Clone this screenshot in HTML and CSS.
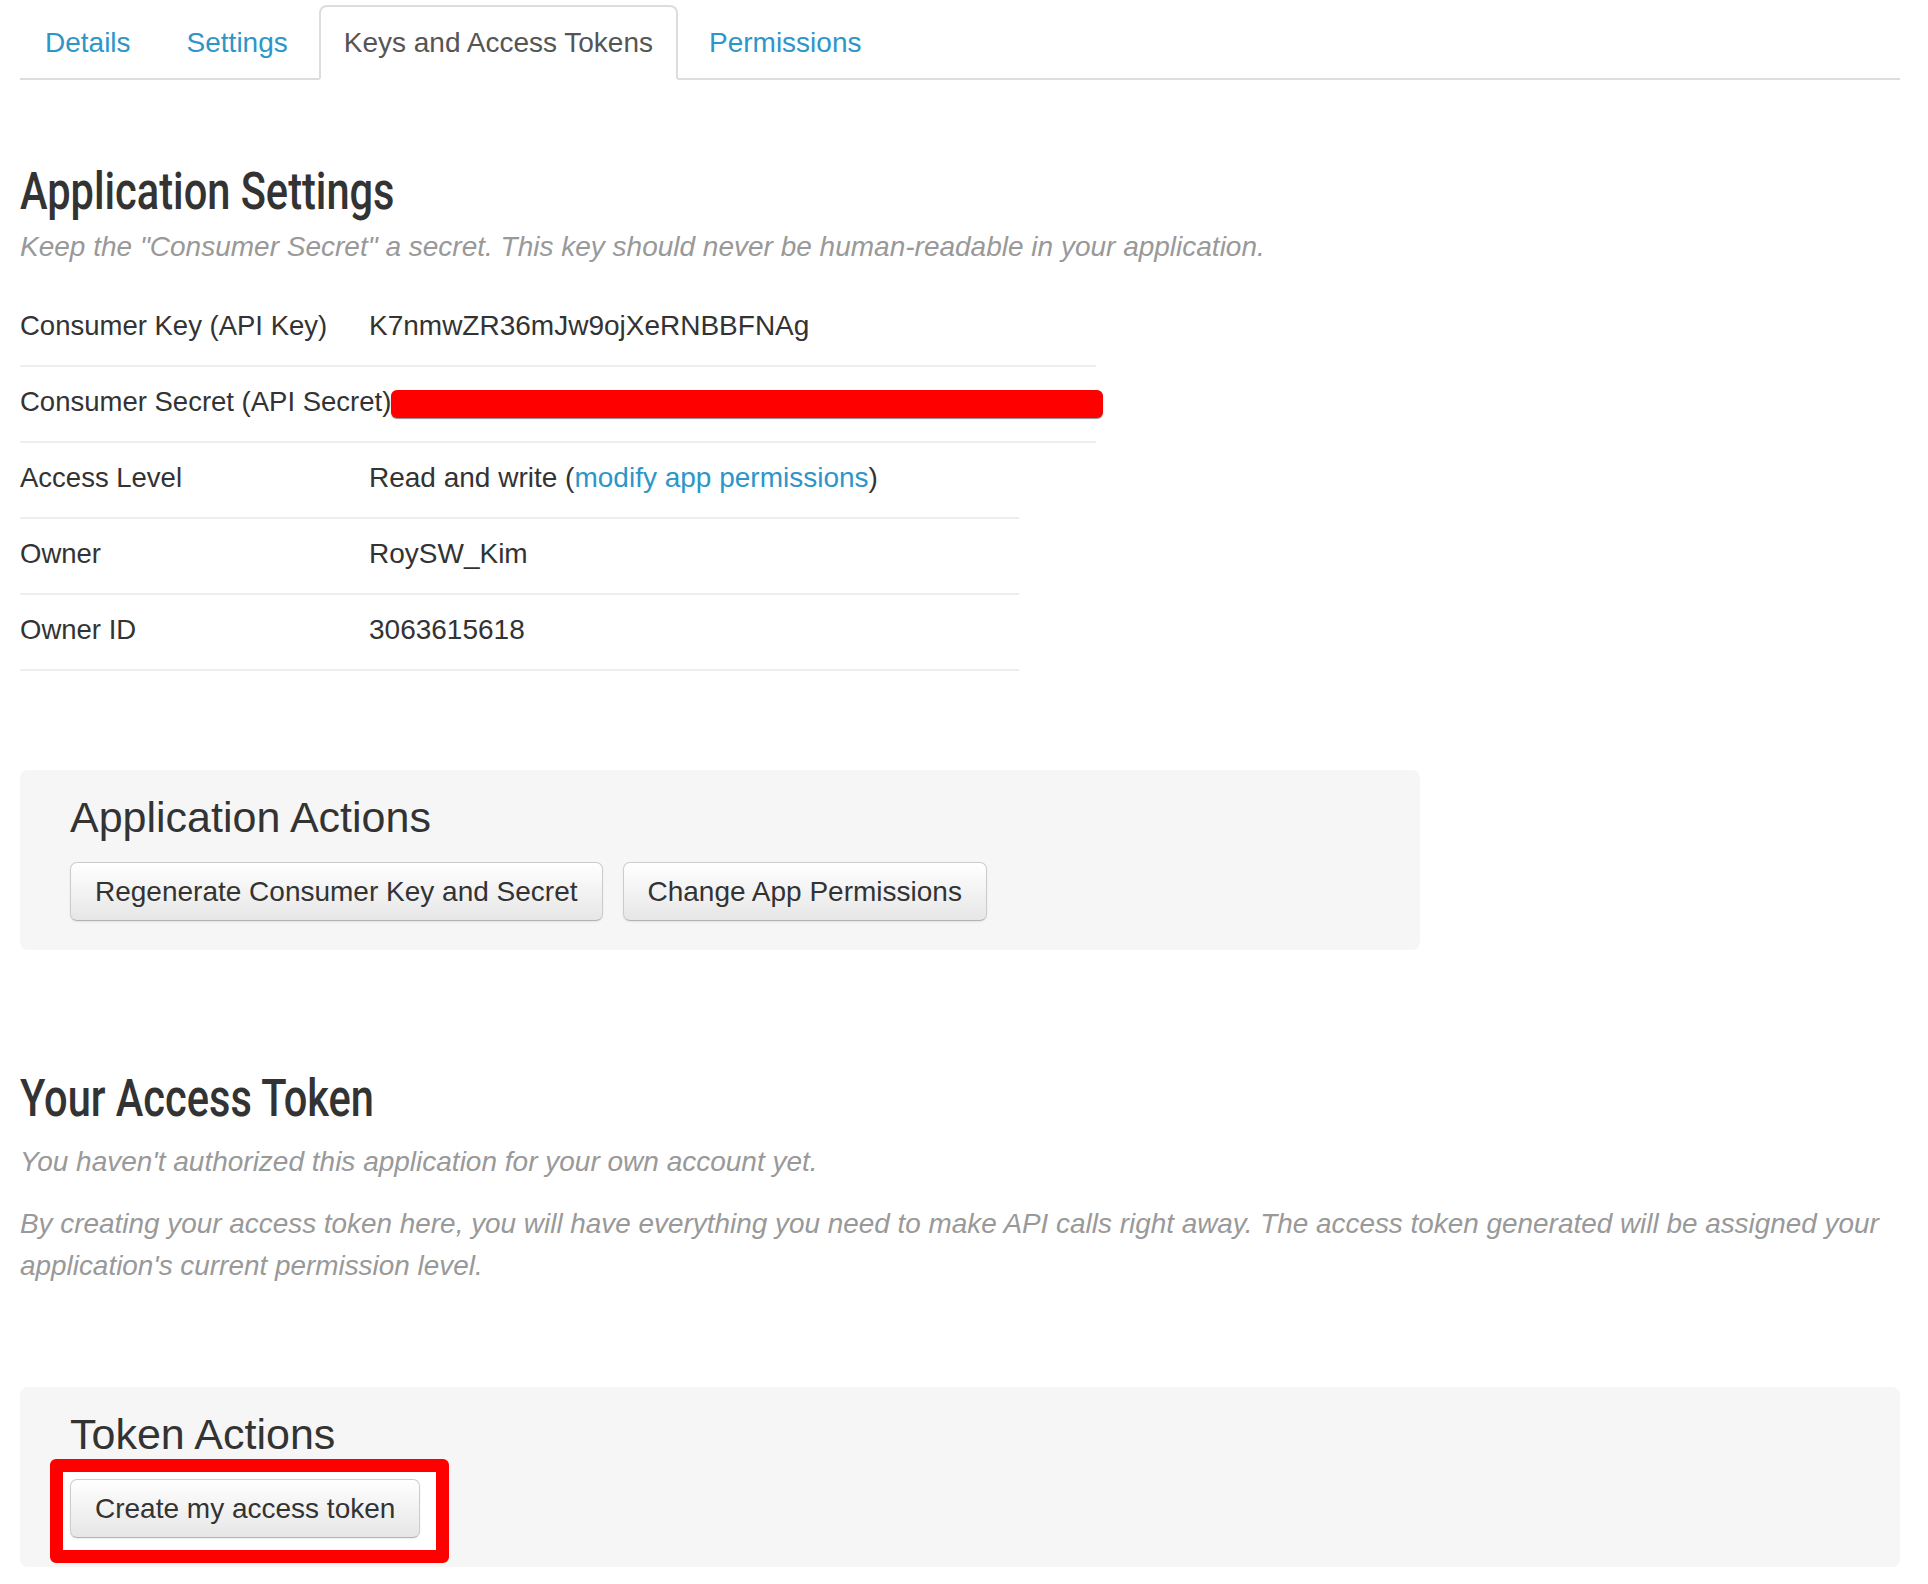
FILE: index.html
```html
<!DOCTYPE html>
<html lang="en">
<head>
<meta charset="utf-8">
<title>Keys and Access Tokens</title>
<link rel="stylesheet" href="styles.css">
</head>
<body>
<div class="page">
  <ul class="tabs">
    <li class="tab"><a class="tab-link" href="#">Details</a></li>
    <li class="tab"><a class="tab-link" href="#">Settings</a></li>
    <li class="tab tab-active"><a class="tab-link" href="#">Keys and Access Tokens</a></li>
    <li class="tab"><a class="tab-link" href="#">Permissions</a></li>
  </ul>

  <h2 class="section-title first">Application Settings</h2>
  <p class="note note-sub">Keep the "Consumer Secret" a secret. This key should never be human-readable in your application.</p>

  <div class="kv">
    <div class="kv-row kv-wide">
      <span class="kv-label">Consumer Key (API Key)</span>
      <span class="kv-value">K7nmwZR36mJw9ojXeRNBBFNAg</span>
    </div>
    <div class="kv-row kv-wide">
      <span class="kv-label">Consumer Secret (API Secret)</span>
      <span class="redact"></span>
    </div>
    <div class="kv-row kv-narrow">
      <span class="kv-label">Access Level</span>
      <span class="kv-value">Read and write (<a class="link" href="#">modify app permissions</a>)</span>
    </div>
    <div class="kv-row kv-narrow">
      <span class="kv-label">Owner</span>
      <span class="kv-value">RoySW_Kim</span>
    </div>
    <div class="kv-row kv-narrow">
      <span class="kv-label">Owner ID</span>
      <span class="kv-value">3063615618</span>
    </div>
  </div>

  <div class="action-box app-actions">
    <h3 class="action-title">Application Actions</h3>
    <div class="btn-row">
      <button class="btn">Regenerate Consumer Key and Secret</button>
      <button class="btn">Change App Permissions</button>
    </div>
  </div>

  <h2 class="section-title second">Your Access Token</h2>
  <p class="note note-auth">You haven't authorized this application for your own account yet.</p>
  <p class="note note-long">By creating your access token here, you will have everything you need to make API calls right away. The access token generated will be assigned your application's current permission level.</p>

  <div class="action-box token-actions">
    <h3 class="action-title">Token Actions</h3>
    <div class="btn-row">
      <span class="highlight-wrap">
        <button class="btn">Create my access token</button>
        <span class="highlight"></span>
      </span>
    </div>
  </div>
</div>
</body>
</html>
```

FILE: styles.css
```css
html, body {
  margin: 0;
  padding: 0;
  background: #ffffff;
}

body {
  font-family: "Liberation Sans", Arial, Helvetica, sans-serif;
  font-size: 28px;
  line-height: 40px;
  color: #333333;
}

.page {
  padding: 5px 28px 0 20px;
}

/* Tabs */
.tabs {
  list-style: none;
  margin: 0;
  padding: 0;
  display: flex;
  border-bottom: 2px solid #dddddd;
}

.tab {
  margin: 0 6px -2px 0;
}

.tab-link {
  display: block;
  padding: 16px 23px 15px;
  line-height: 40px;
  border: 2px solid transparent;
  border-radius: 8px 8px 0 0;
  color: #2d96c9;
  text-decoration: none;
}

.tab-active .tab-link {
  color: #555555;
  background: #ffffff;
  border-color: #dddddd #dddddd transparent;
}

/* Headings */
.section-title {
  font-family: Roboto, "Liberation Sans", sans-serif;
  font-weight: 500;
  font-size: 51px;
  line-height: 56px;
  color: #333333;
  margin: 0;
  transform: scaleX(0.815);
  transform-origin: left center;
}

.section-title.first {
  margin-top: 84px;
}

.section-title.second {
  margin-top: 121px;
}

.note {
  font-style: italic;
  color: #999999;
  margin: 0;
}

.note-sub {
  margin-top: 7px;
}

.note-auth {
  margin-top: 15px;
}

.note-long {
  margin-top: 21px;
  line-height: 42px;
  font-size: 27.9px;
}

/* Key / value rows */
.kv {
  margin-top: 24px;
}

.kv-row {
  display: flex;
  align-items: center;
  padding: 15px 0 19px;
  border-bottom: 2px solid #eeeeee;
}

.kv-wide {
  width: 1076px;
}

.kv-narrow {
  width: 999px;
}

.kv-label {
  font-size: 27.5px;
  min-width: 349px;
  flex: none;
}

.kv-value {
  flex: none;
}

.link {
  color: #2d96c9;
  text-decoration: none;
}

.redact {
  display: block;
  flex: none;
  width: 712px;
  height: 28px;
  margin-top: 4px;
  background: #ff0000;
  border-radius: 6px;
  box-shadow: 0 1px 1px rgba(0, 0, 0, 0.45);
}

/* Action boxes */
.action-box {
  background: #f6f6f6;
  border-radius: 8px;
  padding: 23px 50px 29px;
}

.app-actions {
  margin-top: 99px;
  width: 1300px;
}

.token-actions {
  margin-top: 100px;
}

.action-title {
  font-family: "Liberation Sans", Arial, Helvetica, sans-serif;
  font-weight: normal;
  font-size: 43px;
  line-height: 48px;
  margin: 0;
  color: #333333;
}

.btn-row {
  display: flex;
  gap: 20px;
  margin-top: 21px;
}

.btn {
  font-family: "Liberation Sans", Arial, Helvetica, sans-serif;
  font-size: 28px;
  line-height: 40px;
  color: #333333;
  padding: 8.5px 24px;
  border: 1px solid #cccccc;
  border-bottom-color: #b3b3b3;
  border-radius: 7px;
  background: linear-gradient(to bottom, #ffffff, #e6e6e6);
  box-shadow: inset 0 1px 0 rgba(255, 255, 255, 0.2), 0 1px 2px rgba(0, 0, 0, 0.08);
  cursor: pointer;
}

.highlight-wrap {
  position: relative;
  display: inline-block;
}

.highlight-wrap .btn {
  position: relative;
  z-index: 1;
}

.highlight {
  position: absolute;
  left: -20px;
  top: -20px;
  right: -29px;
  bottom: -25px;
  border: 13px solid #ff0000;
  border-radius: 6px;
  background: #ffffff;
  z-index: 0;
}
```
